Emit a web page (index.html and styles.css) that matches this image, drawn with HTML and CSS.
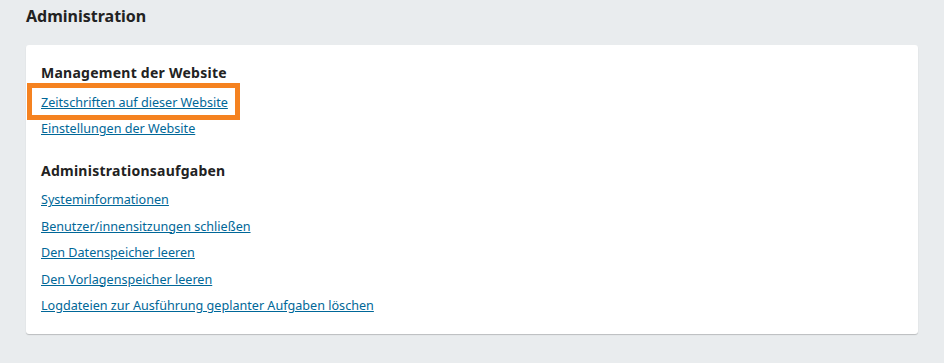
FILE: index.html
```html
<!DOCTYPE html>
<html lang="de">

<head>
    <meta charset="UTF-8">
    <meta name="viewport" content="width=device-width, initial-scale=1.0">
    <title>Administration</title>
    <link rel="stylesheet" href="styles.css">
</head>

<body>

    <div class="page">
        <h1 class="page-title">Administration</h1>

        <div class="panel">

            <!-- SITE MANAGEMENT -->
            <h2>Management der Website</h2>
            <ul class="links">
                <li class="highlight"><a href="#">Zeitschriften auf dieser Website</a></li>
                <li><a href="#">Einstellungen der Website</a></li>
            </ul>

            <!-- ADMIN TASKS -->
            <h2>Administrationsaufgaben</h2>
            <ul class="links">
                <li><a href="#">Systeminformationen</a></li>
                <li><a href="#">Benutzer/innensitzungen schließen</a></li>
                <li><a href="#">Den Datenspeicher leeren</a></li>
                <li><a href="#">Den Vorlagenspeicher leeren</a></li>
                <li><a href="#">Logdateien zur Ausführung geplanter Aufgaben löschen</a></li>
            </ul>

        </div>
    </div>

</body>

</html>
```

FILE: styles.css
```css
body {
    margin: 0;
    background-color: #e9ecee;
    font-family: "Noto Sans", sans-serif;
    color: #222222;
}

.page {
    padding: 0 26px 26px 26px;
}

.page-title {
    margin: 0;
    padding-top: 4px;
    height: 41px;
    font-size: 16px;
    font-weight: 700;
    line-height: 24px;
}

.panel {
    background-color: #ffffff;
    border-radius: 3px;
    box-shadow: 0 1px 1px rgba(0, 0, 0, 0.2);
    padding: 17px 15px 18px 15px;
}

.panel h2 {
    margin: 0;
    font-size: 14px;
    font-weight: 700;
    line-height: 22px;
    letter-spacing: 0.25px;
}

.links {
    list-style: none;
    margin: 8.5px 0 0 0;
    padding: 0;
}

.links + h2 {
    margin-top: 20.8px;
}

.links li {
    font-size: 12.6px;
    line-height: 20px;
    margin-bottom: 6.5px;
}

.links li:last-child {
    margin-bottom: 0;
}

.links a {
    color: #006798;
}

.highlight {
    position: relative;
}

.highlight::after {
    content: "";
    position: absolute;
    left: -14px;
    width: 203px;
    top: -9.5px;
    height: 27px;
    border: 5px solid #f58220;
}
```
